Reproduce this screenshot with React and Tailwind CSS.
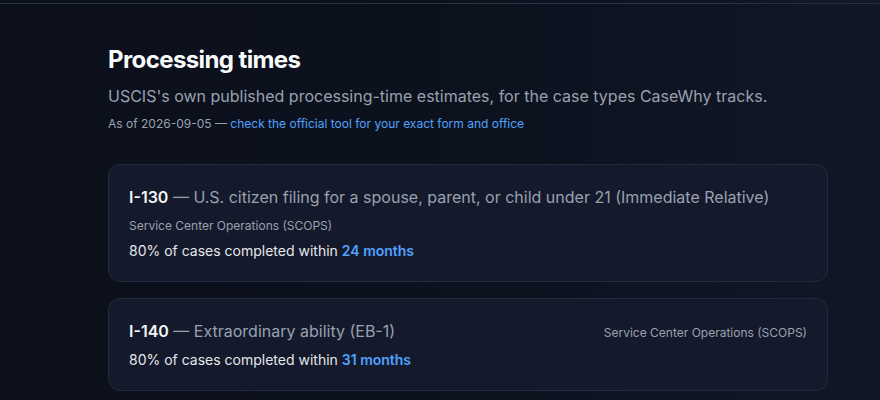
import React from "react";

const items = [
  { form: "I-130", label: "U.S. citizen filing for a spouse, parent, or child under 21 (Immediate Relative)", office: "Service Center Operations (SCOPS)", months: 24 },
  { form: "I-140", label: "Extraordinary ability (EB-1)", office: "Service Center Operations (SCOPS)", months: 31 },
];

export default function App() {
  return (
    <div className="min-h-screen bg-gradient-to-r from-[#0b101b] via-[#0c111e] to-[#111725] text-gray-100" style={{ fontFamily: "Inter, 'Noto Sans', sans-serif" }}>
      <div className="h-[4px] border-b border-[#29313f]" />
      <main className="ml-[108px] w-[720px] pt-10">
        <h1 className="text-2xl font-bold leading-8 tracking-tight text-gray-50">Processing times</h1>
        <p className="mt-2 text-base leading-6 text-gray-400">
          USCIS's own published processing-time estimates, for the case types CaseWhy tracks.
        </p>
        <p className="mt-2 text-xs leading-4 text-gray-400">
          As of 2026-09-05 — <a href="#" className="text-blue-400">check the official tool for your exact form and office</a>
        </p>

        <div className="mt-8 space-y-4">
          {items.map((it) => (
            <div key={it.form} className="rounded-xl border border-[#232a3d] bg-[#141a2b] p-5">
              <div className="flex flex-wrap items-baseline justify-between gap-x-4 gap-y-[9px]">
                <h3 className="text-base leading-6 text-gray-400">
                  <span className="font-semibold text-gray-100">{it.form}</span> — {it.label}
                </h3>
                <span className="text-xs leading-4 text-gray-400">{it.office}</span>
              </div>
              <p className="mt-[7px] text-sm leading-5 text-gray-200">
                80% of cases completed within <span className="font-semibold text-blue-400">{it.months} months</span>
              </p>
            </div>
          ))}
        </div>
      </main>
    </div>
  );
}
